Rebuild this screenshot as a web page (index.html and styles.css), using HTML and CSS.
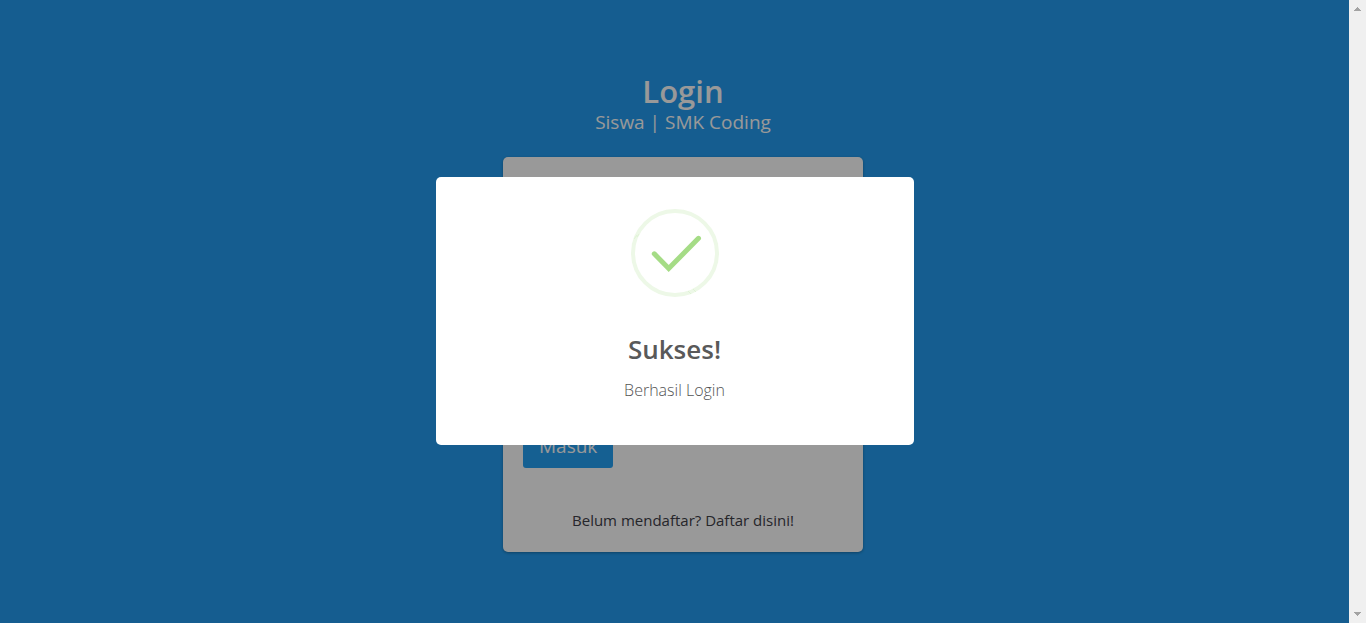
FILE: index.html
```html
<!DOCTYPE html>
<html lang="id">
<head>
<meta charset="utf-8">
<title>Login</title>
<link rel="stylesheet" href="styles.css">
</head>
<body>
<main class="page">
  <header class="heading">
    <h1 class="heading-title">Login</h1>
    <p class="heading-sub">Siswa | SMK Coding</p>
  </header>
  <form class="card">
    <button class="submit" type="button">Masuk</button>
    <a class="register" href="#">Belum mendaftar? Daftar disini!</a>
  </form>
</main>
<div class="backdrop">
  <section class="modal" role="dialog" aria-modal="true" aria-labelledby="modal-title">
    <svg class="modal-icon" viewBox="0 0 88 88" aria-hidden="true">
      <circle cx="44" cy="44" r="42" fill="none" stroke="#edf8e7" stroke-width="4"/>
      <path d="M23.300 44.800L37.700 59.500L67.500 29.300" fill="none" stroke="#a5dc86" stroke-width="5" stroke-linecap="round"/>
      <path d="M3 30l3-4M6 28l2-3M57 82l3 3M62 80l3 3" fill="none" stroke="#d3efc4" stroke-width="0.500"/>
    </svg>
    <h2 class="modal-title" id="modal-title">Sukses!</h2>
    <p class="modal-text">Berhasil Login</p>
  </section>
</div>
<div class="scrollbar" aria-hidden="true">
  <svg class="arrow" viewBox="0 0 7 4" shape-rendering="crispEdges"><path d="M3 0h1v1h1v1h1v1h1v1H0V3h1V2h1V1h1z" fill="#a3a3a3"/></svg>
  <svg class="arrow" viewBox="0 0 7 4" shape-rendering="crispEdges"><path d="M0 0h7v1H6v1H5v1H4v1H3V3H2V2H1V1H0z" fill="#a3a3a3"/></svg>
</div>
</body>
</html>
```
FILE: styles.css
```css
* { box-sizing: border-box; }

body {
  margin: 0;
  background: #239cf0;
  font-family: "Segoe UI", "Open Sans", "Noto Sans", sans-serif;
}

.page {
  display: flex;
  flex-direction: column;
  align-items: center;
  gap: 20px;
  min-height: 100vh;
  padding: 72px 20px 20px;
}

.heading {
  color: #fff;
  text-align: center;
}

.heading-title {
  margin: 0;
  font-size: 31px;
  font-weight: 600;
  line-height: 38px;
}

.heading-sub {
  margin: 0;
  padding-bottom: 2px;
  font-size: 19px;
  line-height: 25px;
}

.card {
  display: flex;
  flex-direction: column;
  justify-content: flex-end;
  align-items: flex-start;
  gap: 40px;
  width: 100%;
  max-width: 360px;
  min-height: 395px;
  padding: 20px;
  border-radius: 5px;
  background: #fff;
  box-shadow: 0 1px 3px rgba(0, 0, 0, 0.3);
}

.submit {
  padding: 7px 16px 9px;
  border: 0;
  border-radius: 3px;
  background: #24a0f4;
  color: #fff;
  font: 400 19px/26px "Segoe UI", "Open Sans", "Noto Sans", sans-serif;
}

.register {
  align-self: center;
  color: #404048;
  font-size: 15px;
  line-height: 24px;
  text-decoration: none;
}

.backdrop {
  position: fixed;
  inset: 0 17px 0 0;
  display: flex;
  align-items: center;
  justify-content: center;
  padding-bottom: 1px;
  background: rgba(0, 0, 0, 0.4);
}

.modal {
  display: flex;
  flex-direction: column;
  align-items: center;
  width: 100%;
  max-width: 478px;
  padding: 32px 20px 42px;
  border-radius: 5px;
  background: #fff;
}

.modal-icon {
  width: 88px;
  height: 88px;
}

.modal-title {
  margin: 32px 0 8px;
  color: #595959;
  font-size: 26px;
  font-weight: 600;
  line-height: 40px;
}

.modal-text {
  margin: 0;
  color: #545454;
  font-size: 16px;
  font-weight: 300;
  line-height: 26px;
}

.scrollbar {
  position: fixed;
  inset: 0 0 0 auto;
  display: flex;
  flex-direction: column;
  align-items: center;
  justify-content: space-between;
  width: 17px;
  padding: 7px 0;
  background: #f0f0f0;
}

.arrow {
  width: 7px;
  height: 4px;
}
```
